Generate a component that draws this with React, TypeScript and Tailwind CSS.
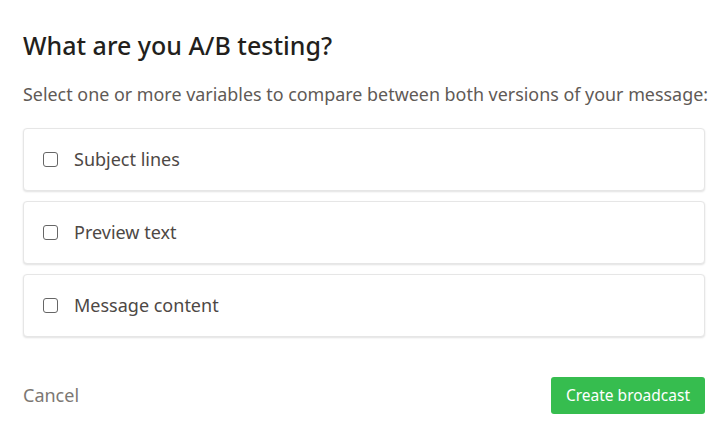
const options = ['Subject lines', 'Preview text', 'Message content'];

export default function App() {
  return (
    <div
      className="w-[725px] h-[441px] bg-white pl-[23px] pr-[20px] pt-[27px]"
      style={{ fontFamily: '"Noto Sans", "Open Sans", sans-serif' }}
    >
      <h1 className="text-[25px] leading-[36px] font-medium text-[#231f1c]">What are you A/B testing?</h1>
      <p className="mt-[18px] whitespace-nowrap text-[17.9px] leading-[26px] text-[#5f5a56]">
        Select one or more variables to compare between both versions of your message:
      </p>
      <div className="mt-[21px] flex flex-col gap-[10px]">
        {options.map((label) => (
          <label
            key={label}
            className="flex h-[63px] items-center gap-[16px] rounded-[4px] border border-[#e6e6e6] bg-white px-[19px] shadow-[0_1px_2px_rgba(0,0,0,0.12)]"
          >
            <span className="h-[15px] w-[15px] rounded-[3px] border border-[#666]" />
            <span className="text-[18px] text-[#4d4845]">{label}</span>
          </label>
        ))}
      </div>
      <div className="mt-[40px] flex items-center justify-between">
        <button className="text-[18px] text-[#7c7773]">Cancel</button>
        <button className="h-[37px] rounded-[3px] bg-[#36bd4f] px-[15px] text-[15.5px] text-white">
          Create broadcast
        </button>
      </div>
    </div>
  );
}
